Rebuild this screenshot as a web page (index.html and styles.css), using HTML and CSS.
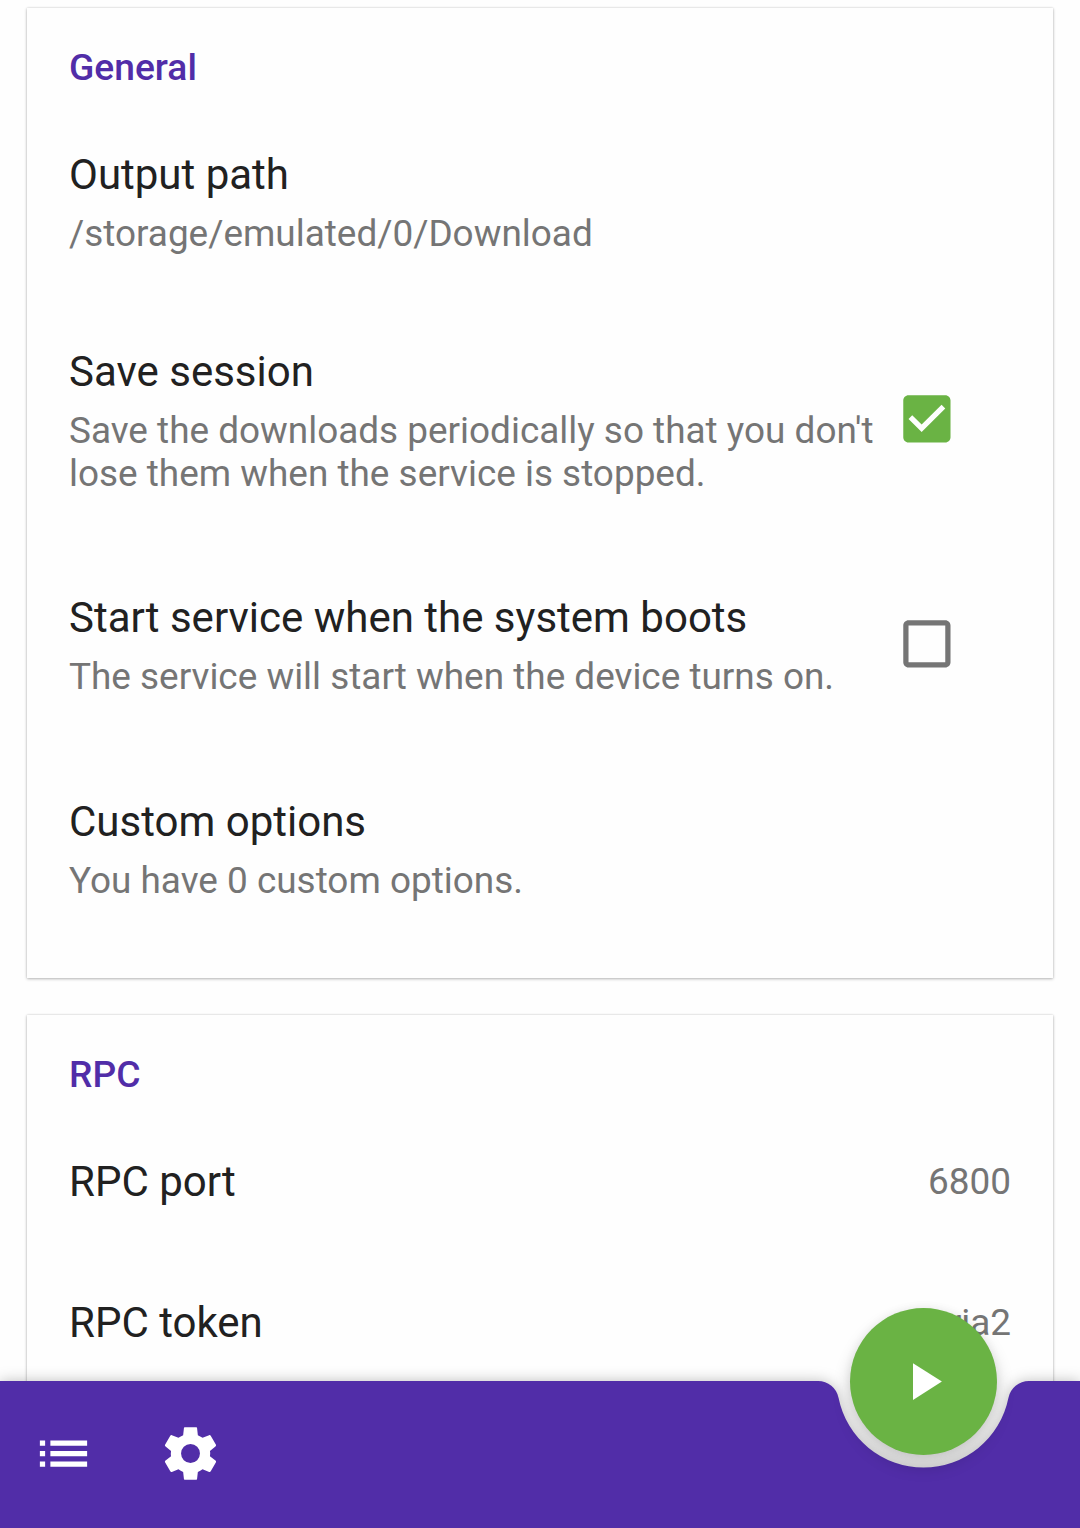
FILE: index.html
```html
<!DOCTYPE html>
<html lang="en">
<head>
<meta charset="utf-8">
<title>Settings</title>
<link rel="stylesheet" href="styles.css">
</head>
<body>
<main class="content">
  <section class="card">
    <h2 class="card-title">General</h2>
    <div class="row path">
      <div class="texts">
        <div class="title">Output path</div>
        <div class="summary">/storage/emulated/0/Download</div>
      </div>
    </div>
    <div class="row save">
      <div class="texts">
        <div class="title">Save session</div>
        <div class="summary">Save the downloads periodically so that you don't<br>lose them when the service is stopped.</div>
      </div>
      <svg class="icon checkbox on" viewBox="0 0 24 24"><path d="M19 3H5c-1.11 0-2 .9-2 2v14c0 1.1.89 2 2 2h14c1.11 0 2-.9 2-2V5c0-1.1-.89-2-2-2zm-9 14l-5-5 1.41-1.41L10 14.17l7.59-7.59L19 8l-9 9z"/></svg>
    </div>
    <div class="row boot">
      <div class="texts">
        <div class="title">Start service when the system boots</div>
        <div class="summary">The service will start when the device turns on.</div>
      </div>
      <svg class="icon checkbox" viewBox="0 0 24 24"><path d="M19 5v14H5V5h14m0-2H5c-1.1 0-2 .9-2 2v14c0 1.1.9 2 2 2h14c1.1 0 2-.9 2-2V5c0-1.1-.9-2-2-2z"/></svg>
    </div>
    <div class="row">
      <div class="texts">
        <div class="title">Custom options</div>
        <div class="summary">You have 0 custom options.</div>
      </div>
    </div>
  </section>
  <section class="card">
    <h2 class="card-title">RPC</h2>
    <div class="row single">
      <div class="title">RPC port</div>
      <div class="summary">6800</div>
    </div>
    <div class="row single">
      <div class="title">RPC token</div>
      <div class="summary">aria2</div>
    </div>
  </section>
</main>
<nav class="bottom-bar">
  <svg class="bar-shape" viewBox="0 0 1080 147"><path d="M0 0H818A21 21 0 0 1 838.6 17A86.6 86.6 0 0 0 1008.4 17A21 21 0 0 1 1029 0H1080V147H0Z"/></svg>
  <svg class="icon" viewBox="0 0 24 24"><path d="M3 13h2v-2H3v2zm0 4h2v-2H3v2zm0-8h2V7H3v2zm4 4h14v-2H7v2zm0 4h14v-2H7v2zM7 7v2h14V7H7z"/></svg>
  <svg class="icon" viewBox="0 0 24 24"><path d="M19.4 13c0-.3.1-.6.1-1s0-.7-.1-1l2.1-1.7c.2-.1.3-.4.2-.6l-2-3.5c-.1-.2-.4-.3-.6-.2l-2.5 1c-.6-.4-1.2-.7-1.8-1l-.3-2.7c0-.2-.1-.3-.3-.3H9.8c-.2 0-.3.1-.3.3L9.2 5c-.6.3-1.2.6-1.8 1L4.9 5c-.2-.1-.5 0-.6.2l-2 3.5c-.1.2 0 .5.2.6L4.6 11c0 .3-.1.6-.1 1s0 .7.1 1l-2.1 1.7c-.2.1-.3.4-.2.6l2 3.5c.1.2.4.3.6.2l2.5-1c.6.4 1.2.7 1.8 1l.3 2.7c0 .2.1.3.3.3h4.4c.2 0 .3-.1.3-.3l.3-2.7c.6-.3 1.2-.6 1.8-1l2.5 1c.2.1.5 0 .6-.2l2-3.5c.1-.2 0-.5-.2-.6L19.4 13zM12 15.6a3.6 3.6 0 1 1 0-7.2 3.6 3.6 0 0 1 0 7.2z"/></svg>
  <div class="fab"><svg class="icon" viewBox="0 0 24 24"><path d="M8 5v14l11-7z"/></svg></div>
</nav>
</body>
</html>
```
FILE: styles.css
```css
* { box-sizing: border-box; }

body {
  margin: 0;
  height: 1528px;
  overflow: hidden;
  position: relative;
  background: #fefefe;
  font-family: Roboto, sans-serif;
}

.content {
  height: 1528px;
  overflow: hidden;
  padding: 8px 27px 0;
  display: flex;
  flex-direction: column;
  gap: 37px;
}

.card {
  flex: none;
  height: 970px;
  padding: 0 42px;
  background: #fefefe;
  box-shadow: 0 1px 3px rgba(0, 0, 0, .26), 0 0 2px rgba(0, 0, 0, .14);
}

.card-title {
  margin: 0;
  padding-top: 38px;
  height: 96px;
  color: #512da8;
  font-size: 37.2px;
  line-height: 43px;
  font-weight: 500;
}

.row {
  display: flex;
  justify-content: space-between;
  padding-top: 46px;
}

.row.path { padding-bottom: 46px; }
.row.save { padding-bottom: 52px; }
.row.boot { padding-bottom: 53px; }

.title {
  color: #212121;
  font-size: 42px;
  line-height: 50px;
  white-space: nowrap;
}

.summary {
  color: #757575;
  font-size: 36.92px;
  line-height: 43px;
  white-space: nowrap;
}

.texts .summary { margin-top: 12px; }

.row.single {
  height: 141px;
  align-items: center;
  padding: 0;
}

.icon {
  display: block;
  flex: none;
  width: 63px;
  height: 63px;
  fill: #fff;
}

.checkbox { fill: #757575; margin: 19px 53px 0 0; }
.checkbox.on { fill: #6ab344; margin-top: 40px; }
.checkbox path { transform: translate(.15px, .15px); }

.bottom-bar {
  position: absolute;
  left: 0;
  right: 0;
  bottom: 0;
  height: 147px;
  display: flex;
  align-items: center;
  gap: 64px;
  padding: 0 0 2px 32px;
}

.bar-shape {
  position: absolute;
  inset: 0;
  width: 1080px;
  height: 147px;
  overflow: visible;
  fill: #512da8;
  filter: drop-shadow(0 0 7px rgba(0, 0, 0, .25));
}

.bottom-bar > .icon { position: relative; }

.fab {
  position: absolute;
  left: 850px;
  top: -73px;
  width: 147px;
  height: 147px;
  border-radius: 50%;
  background: #6ab344;
  display: flex;
  align-items: center;
  justify-content: center;
  box-shadow: 0 10px 18px rgba(0, 0, 0, .2), 0 0 10px rgba(0, 0, 0, .06);
}
```
